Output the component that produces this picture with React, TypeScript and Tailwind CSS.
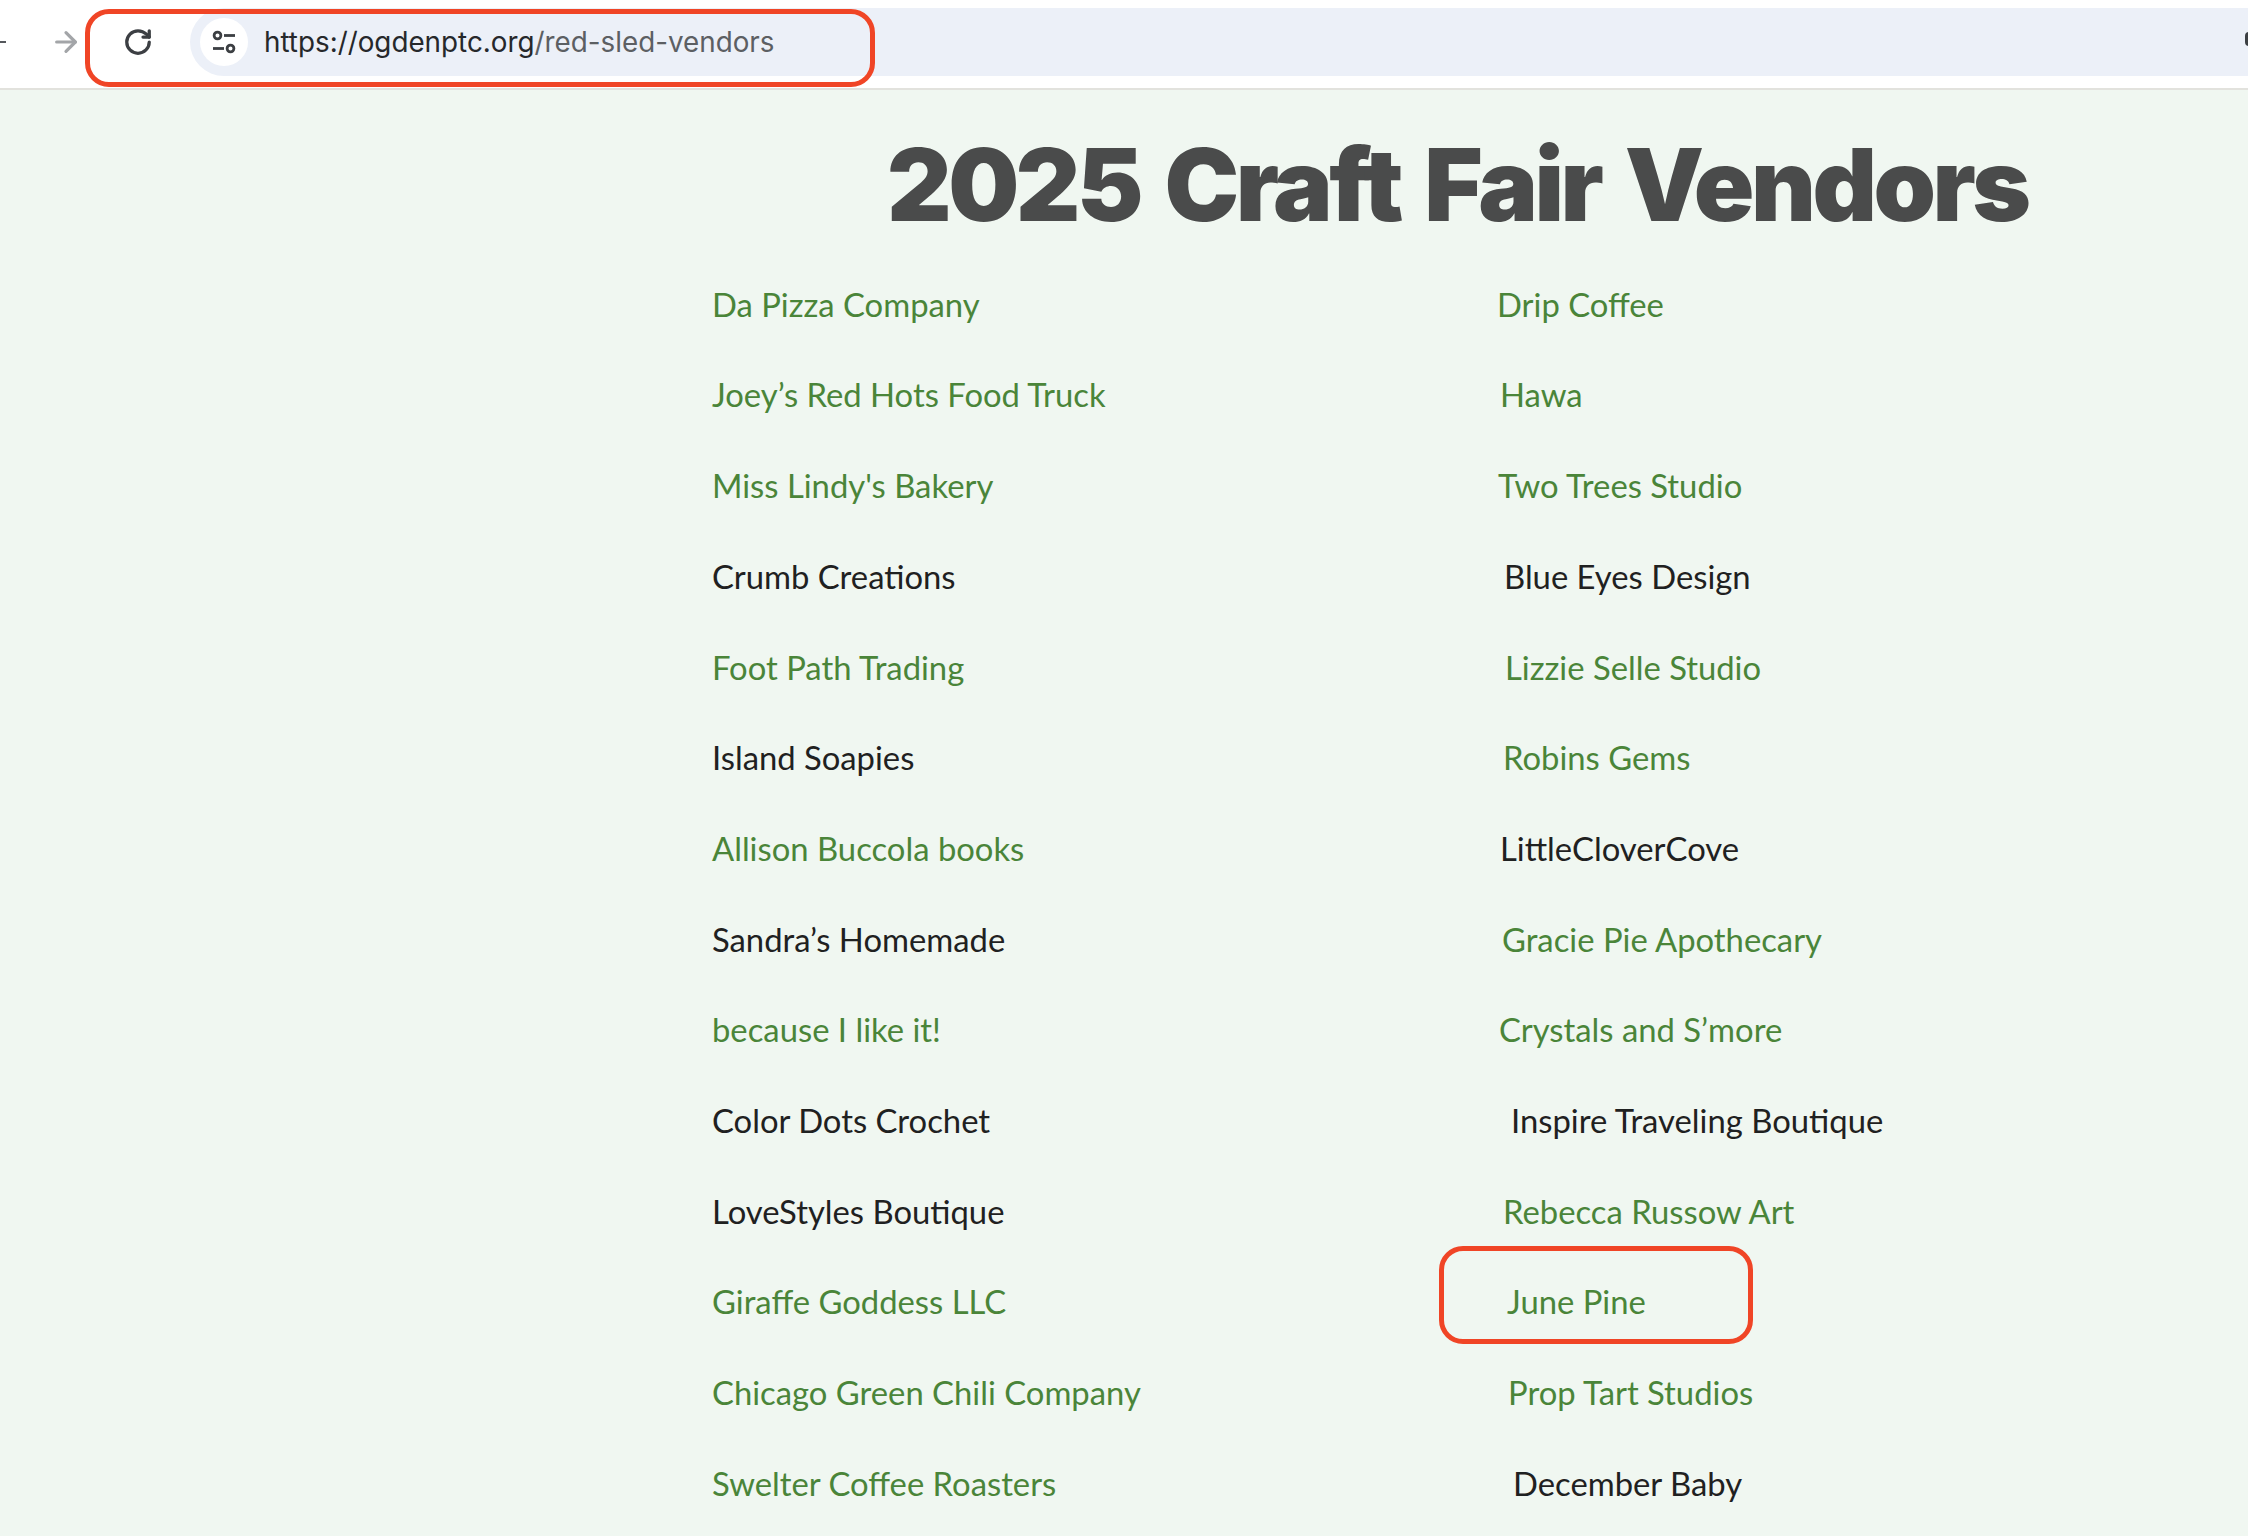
import { RotateCw, ArrowRight } from "lucide-react";

type Vendor = {
  name: string;
  linked: boolean;
  indent?: string;
};

const leftVendors: Vendor[] = [
  { name: "Da Pizza Company", linked: true },
  { name: "Joey’s Red Hots Food Truck", linked: true },
  { name: "Miss Lindy's Bakery", linked: true },
  { name: "Crumb Creations", linked: false },
  { name: "Foot Path Trading", linked: true },
  { name: "Island Soapies", linked: false },
  { name: "Allison Buccola books", linked: true },
  { name: "Sandra’s Homemade", linked: false },
  { name: "because I like it!", linked: true },
  { name: "Color Dots Crochet", linked: false },
  { name: "LoveStyles Boutique", linked: false },
  { name: "Giraffe Goddess LLC", linked: true },
  { name: "Chicago Green Chili Company", linked: true },
  { name: "Swelter Coffee Roasters", linked: true },
];

// the source page indents these with stray spaces, so each one sits a bit differently
const rightVendors: Vendor[] = [
  { name: "Drip Coffee", linked: true, indent: "pl-0" },
  { name: "Hawa", linked: true, indent: "pl-[3px]" },
  { name: "Two Trees Studio", linked: true, indent: "pl-[1px]" },
  { name: "Blue Eyes Design", linked: false, indent: "pl-[7px]" },
  { name: "Lizzie Selle Studio", linked: true, indent: "pl-[8px]" },
  { name: "Robins Gems", linked: true, indent: "pl-[6px]" },
  { name: "LittleCloverCove", linked: false, indent: "pl-[3px]" },
  { name: "Gracie Pie Apothecary", linked: true, indent: "pl-[5px]" },
  { name: "Crystals and S’more", linked: true, indent: "pl-[2px]" },
  { name: "Inspire Traveling Boutique", linked: false, indent: "pl-[14px]" },
  { name: "Rebecca Russow Art", linked: true, indent: "pl-[6px]" },
  { name: "June Pine", linked: true, indent: "pl-[10px]" },
  { name: "Prop Tart Studios", linked: true, indent: "pl-[11px]" },
  { name: "December Baby", linked: false, indent: "pl-[16px]" },
];

function VendorRow({ vendor }: { vendor: Vendor }) {
  return (
    <div
      className={`flex h-[90.7px] items-center ${vendor.indent ?? ""} ${
        vendor.linked ? "text-[#4a8539]" : "text-[#1f2121]"
      }`}
    >
      {vendor.name}
    </div>
  );
}

function SiteSettingsIcon() {
  return (
    <svg width="26" height="26" viewBox="0 0 26 26" fill="none" stroke="#3c3f43" strokeWidth="2.8">
      <circle cx="6.5" cy="6.5" r="3.4" />
      <path d="M13 6.5h11" />
      <circle cx="19.5" cy="19.5" r="3.4" />
      <path d="M2 19.5h11" />
    </svg>
  );
}

export default function App() {
  return (
    <div className="relative h-[1536px] w-[2248px] overflow-hidden bg-[#f0f7f1] font-['Lato',sans-serif]">
      <header className="relative flex h-[90px] border-b-2 border-[#e2e2dd] bg-white pt-2">
        <div className="mt-[33px] h-[2px] w-[6px] bg-[#55585c]" />
        <ArrowRight size={32} strokeWidth={2.4} className="ml-[44px] mt-[18px] text-[#a3a5a8]" />
        <RotateCw size={30} strokeWidth={2.6} className="ml-[41px] mt-[19px] text-[#3c3f43]" />
        <div className="ml-[37px] flex h-[68px] flex-1 items-center rounded-l-[34px] bg-[#ecf0f8] pl-[10px]">
          <div className="flex h-[48px] w-[48px] items-center justify-center rounded-full bg-white">
            <SiteSettingsIcon />
          </div>
          <div className="ml-[16px] pt-[2px] font-['Inter',sans-serif] text-[27.8px] text-[#5c5f63]">
            <span className="text-[#26282b]">https://ogdenptc.org</span>/red-sled-vendors
          </div>
        </div>
        <div className="absolute left-[85px] top-[9px] h-[78px] w-[790px] rounded-[24px] border-[5px] border-[#f04526]" />
        <div className="absolute left-[2245px] top-[32px] h-[14px] w-[8px] rounded-full bg-[#3c3f43]" />
      </header>

      <main>
        <h1 className="mt-[40px] pl-[887px] font-['Inter',sans-serif] text-[100px] leading-[110px] font-black tracking-[-3.5px] [word-spacing:8px] whitespace-nowrap text-[#4a4b4b]">
          2025 Craft Fair Vendors
        </h1>
        <div className="mt-[19px] grid grid-cols-[785px_1fr] pl-[712px] text-[32.8px]">
          <div>
            {leftVendors.map((vendor) => (
              <VendorRow key={vendor.name} vendor={vendor} />
            ))}
          </div>
          <div>
            {rightVendors.map((vendor) => (
              <VendorRow key={vendor.name} vendor={vendor} />
            ))}
          </div>
        </div>
      </main>

      <div className="absolute left-[1439px] top-[1246px] h-[98px] w-[314px] rounded-[24px] border-[5px] border-[#f04526]" />
    </div>
  );
}
